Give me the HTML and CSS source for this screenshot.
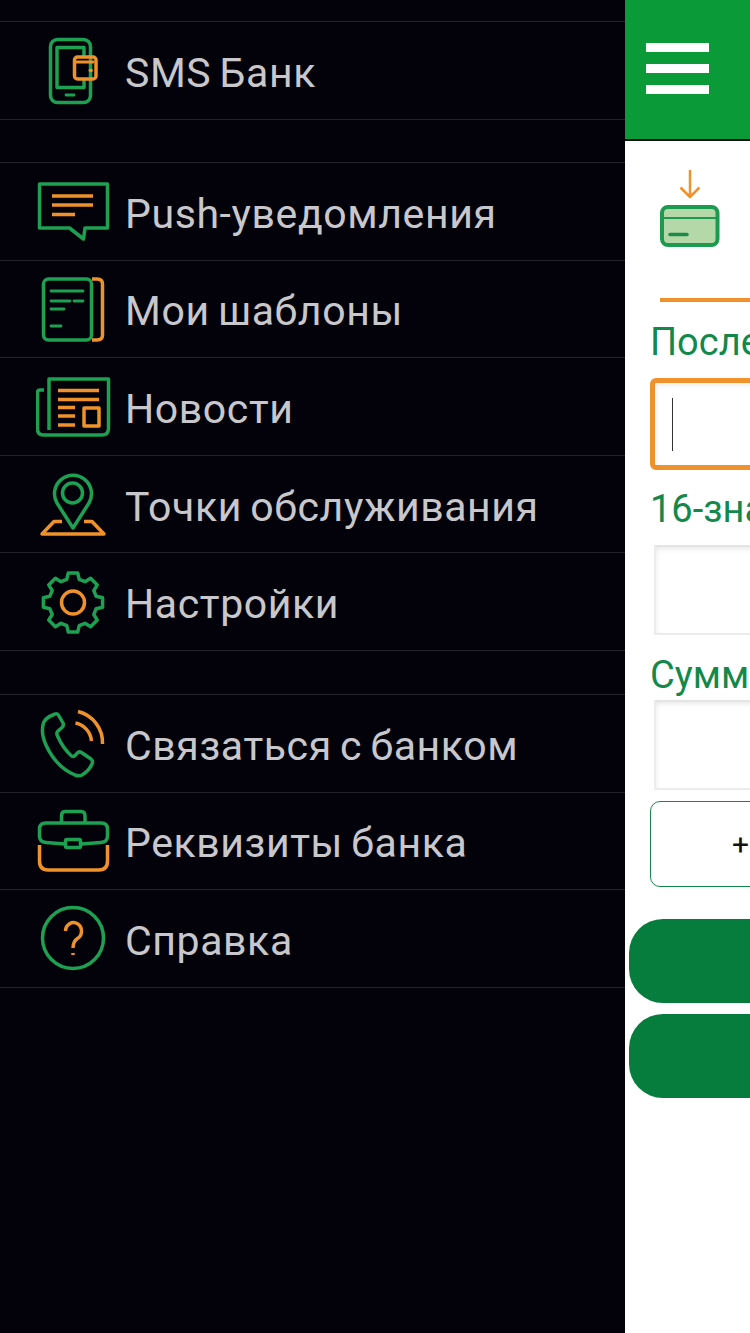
FILE: index.html
```html
<!DOCTYPE html>

<html>
  <head>
    <meta charset="UTF-8" />
    <title>Меню</title>
    <link rel="stylesheet" href="styles.css">
  </head>

  <body>
    <div class="screen">
      <nav class="drawer">
        <ul class="drawer__group drawer__group_first">
          <li class="drawer__row">
            <svg class="icon" viewBox="36 32 76 76">
              <g class="green">
                <rect x="50.5" y="39.5" width="40" height="63" rx="7" />
                <path d="M84 56V47.5H57V87.5H84V80" />
                <path class="thin" d="M66 95H74" />
              </g>
              <g class="orange">
                <rect x="74.5" y="57" width="21.5" height="22" rx="3" />
                <path class="thin" d="M76 62H93" />
                <path class="thin" d="M90 70.5H91.5" />
              </g>
            </svg>
            <span class="drawer__label">SMS Банк</span>
          </li>
        </ul>

        <ul class="drawer__group">
          <li class="drawer__row">
            <svg class="icon" viewBox="36 173 76 76">
              <path class="green" d="M39.5 184H107.5V228H85L83.5 239L69.5 228H39.5Z" />
              <path class="orange" d="M52 196H93M52 205H93M52 214.5H75" />
            </svg>
            <span class="drawer__label">Push-уведомления</span>
          </li>
          <li class="drawer__row">
            <svg class="icon" viewBox="36 271 76 76">
              <rect class="green" x="43.5" y="279" width="48" height="61" rx="5" />
              <path class="orange" d="M92 279H97Q102.5 279 102.5 284V335Q102.5 340 97 340H92" />
              <path class="green thin" d="M51 291H83M51 301H70M74 301H83M51 309H64M51 326H61" />
            </svg>
            <span class="drawer__label">Мои шаблоны</span>
          </li>
          <li class="drawer__row">
            <svg class="icon" viewBox="36 368 76 76">
              <path class="green" d="M49 430V379H108.500V428Q108.500 435 102 435H44Q37.500 435 37.500 429V393Q37.500 390 40 390H44" />
              <path class="orange" d="M58 390.500H99M58 399.500H99M58 407.500H75M58 416H75M58 425H75" />
              <rect class="orange" x="84" y="408" width="15" height="18" />
            </svg>
            <span class="drawer__label">Новости</span>
          </li>
          <li class="drawer__row">
            <svg class="icon" viewBox="36 466 76 76">
              <path class="orange" d="M62 521.500H54L42 534H104L92 521.500H84" />
              <path class="green" d="M73 528L57 503A18.500 18.500 0 1 1 89 503Z" />
              <circle class="green" cx="72.500" cy="493" r="10" />
            </svg>
            <span class="drawer__label">Точки обслуживания</span>
          </li>
          <li class="drawer__row">
            <svg class="icon" viewBox="36 563 76 76">
              <path class="green" transform="translate(73 601.500)" d="M4.700-29.600L6.200-23.200L12-20.800L17.600-24.300L24.300-17.600L20.800-12L23.200-6.200L29.600-4.700V4.700L23.200 6.200L20.800 12L24.300 17.600L17.600 24.300L12 20.800L6.200 23.200L4.700 29.600H-4.700L-6.200 23.200L-12 20.800L-17.600 24.300L-24.300 17.600L-20.800 12L-23.200 6.200L-29.600 4.700V-4.700L-23.200-6.200L-20.800-12L-24.300-17.600L-17.600-24.300L-12-20.800L-6.200-23.200L-4.700-29.600Z" />
              <circle class="orange" cx="73" cy="601.500" r="11.500" />
            </svg>
            <span class="drawer__label">Настройки</span>
          </li>
        </ul>

        <ul class="drawer__group drawer__group_last">
          <li class="drawer__row">
            <svg class="icon" viewBox="36 705 76 76">
              <path class="green" d="M55 714Q57.500 713 59 716L63 723Q64 725.500 62 727.500L58 731Q56 733 57.500 736Q63 748 70.500 755Q73 757.500 75 755.500L78 752.500Q79 751 81.500 752.500L91 759Q93.500 761 92 764Q89 771 82 775Q79 776.500 75 775Q56 767 46 745Q41 734 43 725Q44 718 55 714Z" />
              <path class="orange" d="M78 711.500A32 32 0 0 1 102.500 744M75.500 723A20 20 0 0 1 91.500 741" />
            </svg>
            <span class="drawer__label">Связаться с банком</span>
          </li>
          <li class="drawer__row">
            <svg class="icon" viewBox="36 803 76 76">
              <path class="orange" d="M39.500 845V861Q39.500 870 48 870H99Q107.500 870 107.500 861V845" />
              <path class="green" d="M65 844L46 842.500Q39.500 842 39.500 836V829Q39.500 823 46 823H101Q107.500 823 107.500 829V836Q107.500 842 101 842.500L81 844" />
              <path class="green" d="M61.500 822V816Q61.500 811.500 65 811.500H81Q85 811.500 85 816V822" />
              <rect class="green" x="65.500" y="839.500" width="15" height="8" rx="1.500" />
            </svg>
            <span class="drawer__label">Реквизиты банка</span>
          </li>
          <li class="drawer__row">
            <svg class="icon" viewBox="36 900 76 76">
              <circle class="green" cx="73" cy="938" r="30.500" />
              <path class="orange" d="M65.500 931A8 8.500 0 1 1 77.500 938.500Q73 941.500 73 948" />
              <path class="orange" d="M73 953V955" />
            </svg>
            <span class="drawer__label">Справка</span>
          </li>
        </ul>
      </nav>

      <main class="panel">
        <header class="panel__header">
          <div class="burger">
            <div class="burger__bar"></div>
            <div class="burger__bar"></div>
            <div class="burger__bar"></div>
          </div>
        </header>

        <section class="panel__tab">
          <svg class="tab-icon" viewBox="0 0 64 84">
            <path class="orange tab-icon__arrow" d="M30 2V29M20.500 19.500L30 29L39.500 19.500" />
            <rect class="tab-icon__card" x="2" y="39" width="55.500" height="38" rx="6" />
            <path class="tab-icon__line" d="M2 50H57.500" />
            <path class="tab-icon__dash" d="M10 66.500H27" />
          </svg>
        </section>

        <section class="panel__form">
          <label class="field-title">После</label>
          <div class="input input_active">
            <div class="input__caret"></div>
          </div>
          <label class="field-title">16-зна</label>
          <div class="input input_second"></div>
          <label class="field-title field-title_tight">Сумм</label>
          <div class="input"></div>
          <div class="add-button">+</div>
        </section>

        <div class="pill"></div>
        <div class="pill"></div>
      </main>
    </div>
  </body>
</html>
```

FILE: styles.css
```css
:root {
  --color-bg: #03020a;
  --color-line: #24232c;
  --color-text: #c8c8cc;
  --color-green: #1ea052;
  --color-orange: #f0922b;
  --color-title: #12894b;
  --color-header: #0a9a38;
  --color-button: #067d3d;
}

* {
  box-sizing: border-box;
  margin: 0;
  padding: 0;
}

html,
body {
  height: 100%;
  overflow: hidden;
}

body {
  background-color: #ffffff;
  font-family: Roboto, "Noto Sans", sans-serif;
}

ul {
  list-style: none;
}

.screen {
  display: flex;
  height: 1333px;
  width: 750px;
}

/* left menu */
.drawer {
  background-color: var(--color-bg);
  flex: 0 0 625px;
  padding-top: 21px;
}

.drawer__group {
  border-top: 1px solid var(--color-line);
  margin-top: 42.4px;
}

.drawer__group_first {
  margin-top: 0;
}

.drawer__group_last {
  margin-top: 43px;
}

.drawer__row {
  align-items: center;
  border-bottom: 1px solid var(--color-line);
  display: flex;
  gap: 14px;
  height: 97.6px;
  padding-left: 36px;
}

.drawer__label {
  color: var(--color-text);
  font-size: 41px;
  letter-spacing: 0.6px;
  margin-left: -1px;
  padding-top: 5px;
  white-space: nowrap;
  word-spacing: -2.5px;
}

.icon {
  flex: 0 0 76px;
  height: 76px;
  width: 76px;
}

.green,
.orange {
  fill: none;
  stroke-width: 3.5;
  stroke-linejoin: round;
}

.green {
  stroke: var(--color-green);
}

.orange {
  stroke: var(--color-orange);
}

.thin {
  stroke-width: 2.8;
  stroke-linecap: round;
}

/* right part of the screen behind the menu */
.panel {
  flex: 0 0 125px;
  overflow: hidden;
}

.panel__header {
  background-color: var(--color-header);
  border-bottom: 2px solid #111111;
  height: 141px;
  padding: 43px 0 0 21px;
}

.burger {
  display: flex;
  flex-direction: column;
  gap: 12px;
  width: 63px;
}

.burger__bar {
  background-color: #ffffff;
  height: 9px;
}

.panel__tab {
  border-bottom: 4px solid var(--color-orange);
  height: 161px;
  margin-left: 35px;
  padding-top: 27px;
  width: 200px;
}

.tab-icon {
  display: block;
  height: 84px;
  width: 64px;
}

.tab-icon__arrow {
  stroke-width: 2.5;
}

.tab-icon__card {
  fill: #b5d8a9;
  stroke: #1c9a50;
  stroke-width: 4;
}

.tab-icon__line {
  stroke: #1c9a50;
  stroke-width: 2;
}

.tab-icon__dash {
  stroke: #1c8a48;
  stroke-linecap: round;
  stroke-width: 3.5;
}

.panel__form {
  padding: 19px 0 0 25px;
}

.field-title {
  color: var(--color-title);
  display: block;
  font-size: 38px;
  height: 57px;
  line-height: 43px;
  white-space: nowrap;
}

.field-title_tight {
  height: 45px;
  line-height: 41px;
}

.input {
  background-color: #ffffff;
  border: 2px solid #ececec;
  border-top-color: #e4e4e4;
  box-shadow: inset 0 4px 6px -3px #e4e4e4, inset 4px 0 6px -4px #eeeeee;
  height: 90px;
  margin: 0 0 11px 4px;
  width: 200px;
}

.input_second {
  margin-bottom: 20px;
}

.input_active {
  align-items: center;
  border: 5px solid var(--color-orange);
  border-radius: 6px;
  display: flex;
  height: 92px;
  margin: 0 0 18px 0;
  padding-left: 17px;
}

.input__caret {
  background-color: #333333;
  height: 53px;
  width: 1px;
}

.add-button {
  align-items: center;
  border: 1.5px solid var(--color-title);
  border-radius: 10px;
  color: #111111;
  display: flex;
  font-size: 30px;
  height: 86px;
  padding-left: 81px;
  width: 200px;
}

.pill {
  background-color: var(--color-button);
  border-radius: 34px;
  height: 84px;
  margin: 11px 0 0 4px;
  width: 200px;
}

.panel__form + .pill {
  margin-top: 32px;
}
```
